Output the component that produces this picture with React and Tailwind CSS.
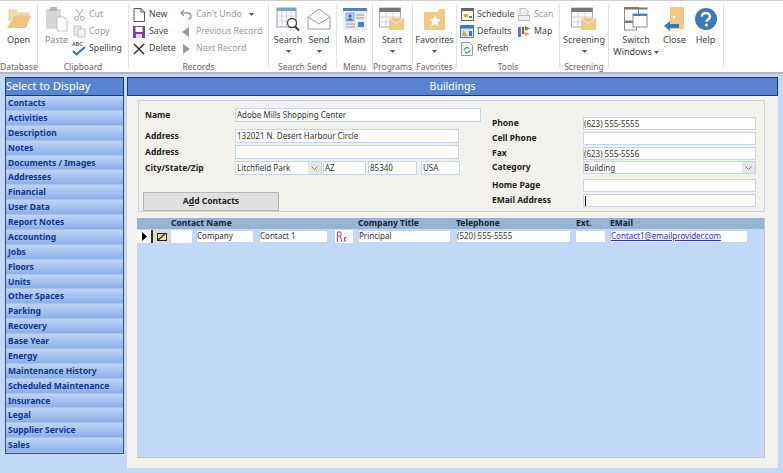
import React from 'react';

const Caret = () => (
  <svg width="5" height="3" viewBox="0 0 5 3" className="shrink-0"><path d="M0 0h5L2.500 3z" fill="#555" /></svg>
);

const IFolder = () => (
  <svg width="26" height="20" viewBox="0 0 26 20"><path d="M3 1h7l2 3h11v3H9L3 12z" fill="#f0dcb2" stroke="#d9bd86" strokeWidth="0.6" /><path d="M8 7h17l-5 12H1z" fill="#efc47d" /></svg>
);
const IPaste = () => (
  <svg width="24" height="26" viewBox="0 0 24 26"><rect x="1" y="3" width="15" height="20" rx="1" fill="#d6d6d6" /><rect x="5" y="1" width="7" height="4" fill="#b5b5b5" /><path d="M12 11h7l3 3v11H12z" fill="#fff" stroke="#c4c4c4" /></svg>
);
const IScissors = () => (
  <svg width="13" height="13" viewBox="0 0 13 13" fill="none" stroke="#aaa" strokeWidth="1"><path d="M3 1l5 8M10 1L5 9" /><circle cx="3.500" cy="10.500" r="2" /><circle cx="9.500" cy="10.500" r="2" /></svg>
);
const ICopy = () => (
  <svg width="13" height="13" viewBox="0 0 13 13" fill="#e8e8e8" stroke="#b5b5b5" strokeWidth="0.8"><rect x="1" y="1" width="7" height="9" /><rect x="5" y="4" width="7" height="8" fill="#f4f4f4" /></svg>
);
const ISpell = () => (
  <svg width="14" height="15" viewBox="0 0 14 15"><text x="0" y="5" fontSize="5" fontWeight="700" fill="#555" fontFamily="Liberation Sans">ABC</text><path d="M1 10l3.500 3.500L13 6" fill="none" stroke="#2f6fc0" strokeWidth="2" /></svg>
);
const INew = () => (
  <svg width="12" height="14" viewBox="0 0 12 14"><path d="M1 .5h7l3.500 3.500v9.500H1z" fill="#fff" stroke="#555" /><path d="M8 .5V4h3.500" fill="none" stroke="#555" /></svg>
);
const ISave = () => (
  <svg width="12" height="12" viewBox="0 0 12 12"><rect width="12" height="12" fill="#7a3fa8" /><rect x="2.500" y="1" width="7" height="5" fill="#fff" /><rect x="3" y="8" width="6" height="4" fill="#ddd" /></svg>
);
const IDelete = () => (
  <svg width="12" height="12" viewBox="0 0 12 12"><path d="M1 1l10 10M11 1L1 11" stroke="#333" strokeWidth="1.500" /></svg>
);
const IUndo = () => (
  <svg width="12" height="11" viewBox="0 0 12 11" fill="none" stroke="#999" strokeWidth="1.400"><path d="M4 1L1 4l3 3" /><path d="M1 4h6c3 0 4 2 4 3.500S10 10 8 10" /></svg>
);
const IPrev = () => (
  <svg width="8" height="10" viewBox="0 0 8 10"><path d="M7 0v10L0 5z" fill="#999" /></svg>
);
const INext = () => (
  <svg width="8" height="10" viewBox="0 0 8 10"><path d="M1 0v10l7-5z" fill="#999" /></svg>
);
const ISearch = () => (
  <svg width="25" height="26" viewBox="0 0 25 26"><rect x="1" y="2" width="19" height="19" fill="#fff" stroke="#999" /><rect x="1" y="2" width="19" height="3" fill="#7d9fd0" /><path d="M6 5v16M10.500 5v16M15 5v16M1 10h19M1 15h19" stroke="#b5c3d8" strokeWidth="0.7" /><circle cx="16" cy="17" r="4.500" fill="#fff" stroke="#444" strokeWidth="1.300" /><path d="M19 20.500l4 4" stroke="#333" strokeWidth="1.800" /></svg>
);
const ISend = () => (
  <svg width="24" height="22" viewBox="0 0 24 22" fill="#fff" stroke="#9a9a9a"><path d="M1 9L12 1l11 8v12H1z" /><path d="M1 9l11 7 11-7" /></svg>
);
const IMain = () => (
  <svg width="24" height="22" viewBox="0 0 24 22"><rect width="24" height="22" fill="#e9edf2" /><rect width="24" height="3" fill="#4f81bd" /><rect x="3" y="5" width="8" height="8" fill="#c7d6ea" stroke="#4f81bd" strokeWidth="0.6" /><circle cx="7" cy="8" r="1.800" fill="#3f6ea8" /><path d="M4 12.500c1-3 5-3 6 0z" fill="#3f6ea8" /><path d="M13 7h8M13 10h8M3 16h9M3 19h9" stroke="#999" strokeWidth="1.200" /><rect x="15" y="14" width="6" height="5" fill="#4f81bd" /></svg>
);
const IGridMail = () => (
  <svg width="26" height="24" viewBox="0 0 26 24"><rect x="0.500" y="1" width="21" height="19" fill="#fff" stroke="#aaa" /><rect x="0.500" y="1" width="21" height="4" fill="#777" /><path d="M7 5v15M14 5v15M1 10h20M1 15h20" stroke="#bbb" strokeWidth="0.7" /><rect x="10" y="11" width="15" height="12" fill="#efc985" /><path d="M10 11l7.500 6 7.500-6" fill="none" stroke="#fff" strokeWidth="0.800" /></svg>
);
const IFav = () => (
  <svg width="22" height="24" viewBox="0 0 22 24"><path d="M0 5h14l1-3h6v21H0z" fill="#efc985" /><path d="M11 8l1.800 4 4.200.4-3.200 2.800 1 4.200L11 17.200 7.200 19.400l1-4.200L5 12.400l4.200-.4z" fill="#fff" /></svg>
);
const ISchedule = () => (
  <svg width="13" height="13" viewBox="0 0 13 13"><rect x="0.500" y="0.500" width="12" height="12" fill="#fff" stroke="#666" /><rect x="0.500" y="0.500" width="12" height="2.500" fill="#666" /><rect x="3" y="6" width="4" height="3" fill="#e8a23c" /><rect x="8" y="8" width="3" height="2" fill="#4f81bd" /></svg>
);
const IDefaults = () => (
  <svg width="14" height="13" viewBox="0 0 14 13"><rect x="0.500" y="0.500" width="13" height="12" fill="#dbe6f3" stroke="#4f81bd" /><rect x="0.500" y="0.500" width="13" height="3" fill="#3a76b8" /><path d="M3 5l5 6H2z" fill="#e8a23c" /><rect x="9" y="6" width="3" height="5" fill="#3a76b8" /></svg>
);
const IRefresh = () => (
  <svg width="12" height="14" viewBox="0 0 12 14"><path d="M.5.5h8l3 3v10H.5z" fill="#f5f5f5" stroke="#999" /><path d="M3 8.500a3 3 0 015-2M9 8a3 3 0 01-5 2" fill="none" stroke="#3f9a52" strokeWidth="1.200" /></svg>
);
const IScan = () => (
  <svg width="12" height="13" viewBox="0 0 12 13" fill="#eee" stroke="#bbb"><path d="M2 .5h6l2 2v5H2z" /><rect x="0.500" y="7.500" width="11" height="5" /></svg>
);
const IMap = () => (
  <svg width="13" height="12" viewBox="0 0 13 12"><rect x="0" y="1" width="3" height="10" fill="#4f81bd" /><rect x="4" y="1" width="2" height="7" fill="#c0392b" /><path d="M7 0l5 2.500L7 5z" fill="#3f9a52" /><path d="M7 6l5 2-5 2z" fill="#e8a23c" /></svg>
);
const ISwitch = () => (
  <svg width="24" height="24" viewBox="0 0 24 24"><rect x="0.500" y="0.500" width="14" height="15" fill="#fff" stroke="#888" /><rect x="0.500" y="0.500" width="23" height="2" fill="#777" /><rect x="0.500" y="14" width="12" height="9" fill="#fff" stroke="#888" /><rect x="0.500" y="14" width="12" height="2" fill="#777" /><rect x="9" y="7" width="14" height="13" fill="#fff" stroke="#888" /><rect x="9" y="7" width="14" height="2" fill="#4f81bd" /></svg>
);
const IClose = () => (
  <svg width="22" height="24" viewBox="0 0 22 24"><rect x="6" y="0" width="14" height="22" fill="#efc985" /><circle cx="10" cy="10" r="1" fill="#fff" /><path d="M0 19l6-5v3h9v4H6v3z" fill="#3a76b8" /></svg>
);
const IHelp = () => (
  <svg width="22" height="22" viewBox="0 0 22 22"><circle cx="11" cy="11" r="11" fill="#3f78b8" /><path d="M7 8.500C7 6 9 5 11 5s4 1.200 4 3.500c0 3-3.600 2.800-3.600 5.500" fill="none" stroke="#fff" strokeWidth="2.400" /><circle cx="11.400" cy="17" r="1.500" fill="#fff" /></svg>
);

const Group = ({ label, w, children }) => (
  <div className={`${w} flex h-[64px] shrink-0 flex-col border-r border-[#e2e2e2]`}>
    <div className="flex flex-1">{children}</div>
    <div className="-mb-[5px] text-center text-[8.5px] leading-[12px] whitespace-nowrap text-[#666]">{label}</div>
  </div>
);

const Large = ({ w, label, icon, caret, dim, second }) => (
  <div className={`${w} flex flex-col items-center pt-[1px]`}>
    <div className="flex h-[28px] items-center justify-center">{icon}</div>
    <div className={`mt-[1px] text-[9px] leading-[12px] whitespace-nowrap ${dim ? 'text-[#888]' : 'text-[#444]'}`}>{label}</div>
    {second && <div className="flex items-center gap-[2px] text-[9px] leading-[12px] whitespace-nowrap text-[#444]">{second}{caret && <Caret />}</div>}
    {caret && !second && <div className="mt-[4px] leading-none"><Caret /></div>}
  </div>
);

const Small = ({ icon, label, dim, caret }) => (
  <div className={`flex h-[17px] items-center gap-[3px] text-[8.8px] whitespace-nowrap ${dim ? 'text-[#9a9a9a]' : 'text-[#444]'}`}>
    <span className="flex w-[14px] shrink-0 justify-center">{icon}</span>
    {label}
    {caret && <span className="ml-[4px]"><Caret /></span>}
  </div>
);

const Ribbon = () => (
  <div className="flex h-[74px] border-t border-b-2 border-t-[#d0d0d0] border-b-[#b4b4b4] bg-white pt-[3px] [font-family:'Noto_Sans',sans-serif]">
    <Group label="Database" w="w-[38px]"><Large w="w-[37px]" label="Open" icon={<IFolder />} /></Group>
    <Group label="Clipboard" w="w-[91px]">
      <div className="w-[33px]"><Large w="w-[37px]" label="Paste" dim icon={<IPaste />} /></div>
      <div className="ml-[1px] flex flex-col pt-[2px]">
        <Small dim icon={<IScissors />} label="Cut" />
        <Small dim icon={<ICopy />} label="Copy" />
        <Small icon={<ISpell />} label="Spelling" />
      </div>
    </Group>
    <Group label="Records" w="w-[140px]">
      <div className="flex w-[50px] flex-col pt-[2px] pl-[3px]">
        <Small icon={<INew />} label="New" />
        <Small icon={<ISave />} label="Save" />
        <Small icon={<IDelete />} label="Delete" />
      </div>
      <div className="flex flex-col pt-[2px]">
        <Small dim caret icon={<IUndo />} label="Can't Undo" />
        <Small dim icon={<IPrev />} label="Previous Record" />
        <Small dim icon={<INext />} label="Next Record" />
      </div>
    </Group>
    <Group label="Search Send" w="w-[68px]">
      <div className="flex pl-[2px]">
        <Large w="w-[34px]" label="Search" caret icon={<ISearch />} />
        <Large w="w-[28px]" label="Send" caret icon={<ISend />} />
      </div>
    </Group>
    <Group label="Menu" w="w-[36px]"><Large w="w-[36px]" label="Main" icon={<IMain />} /></Group>
    <Group label="Programs" w="w-[40px]"><Large w="w-[38px]" label="Start" caret icon={<IGridMail />} /></Group>
    <Group label="Favorites" w="w-[44px]"><Large w="w-[44px]" label="Favorites" caret icon={<IFav />} /></Group>
    <Group label="Tools" w="w-[103px]">
      <div className="flex w-[60px] flex-col pt-[2px] pl-[3px]">
        <Small icon={<ISchedule />} label="Schedule" />
        <Small icon={<IDefaults />} label="Defaults" />
        <Small icon={<IRefresh />} label="Refresh" />
      </div>
      <div className="flex flex-col pt-[2px]">
        <Small dim icon={<IScan />} label="Scan" />
        <Small icon={<IMap />} label="Map" />
      </div>
    </Group>
    <Group label="Screening" w="w-[49px]"><Large w="w-[49px]" label="Screening" caret icon={<IGridMail />} /></Group>
    <Group label="" w="w-[115px]">
      <div className="flex pl-[4px]">
        <Large w="w-[46px]" label="Switch" second="Windows" caret icon={<ISwitch />} />
        <Large w="w-[31px]" label="Close" icon={<IClose />} />
        <Large w="w-[31px]" label="Help" icon={<IHelp />} />
      </div>
    </Group>
  </div>
);

const navItems = ['Contacts','Activities','Description','Notes','Documents / Images','Addresses','Financial','User Data','Report Notes','Accounting','Jobs','Floors','Units','Other Spaces','Parking','Recovery','Base Year','Energy','Maintenance History','Scheduled Maintenance','Insurance','Legal','Supplier Service','Sales'];

const Sidebar = () => (
  <div className="flex w-[119px] shrink-0 flex-col">
    <div className="flex h-[19px] items-center border border-[#24365a] bg-[#5885d2] text-[11px] text-white [font-family:'Liberation_Sans',sans-serif]">Select to Display</div>
    <div className="flex h-[358px] flex-col border-x border-b border-[#3f5068]">
      {navItems.map((n) => (
        <div key={n} className="flex flex-1 items-center border-b border-[#a9c4ea] bg-gradient-to-b from-[#bcd5f6] to-[#8cb0e5] pt-[1px] pl-[2px] text-[8.5px] font-bold whitespace-nowrap text-[#0f3596] [font-family:'Liberation_Sans',sans-serif]">{n}</div>
      ))}
    </div>
  </div>
);

const Box = ({ w, children, h = 'h-[14px]', pl = 'pl-[1px]' }) => (
  <div className={`${w} ${h} ${pl} flex shrink-0 items-center border border-[#c3d5e8] bg-white text-[8px] whitespace-nowrap text-[#333] [font-family:'Liberation_Sans',sans-serif]`}>{children}</div>
);

const Label = ({ w, children }) => (
  <div className={`${w} shrink-0 pb-[2px] text-[8.5px] leading-[11px] font-bold whitespace-nowrap text-[#222] [font-family:'Liberation_Sans',sans-serif]`}>{children}</div>
);

const ComboBtn = () => (
  <div className="ml-auto flex h-full w-[13px] items-center justify-center bg-[#e6e6e6]">
    <svg width="7" height="4" viewBox="0 0 7 4" fill="none" stroke="#777"><path d="M.5.5l3 3 3-3" /></svg>
  </div>
);

const Form = () => {
  const rh = 'h-[13px]';
  return (
    <div className="mt-[4px] mr-[13px] ml-[11px] flex h-[112px] shrink-0 border border-[#c3d5e8] bg-[#f3f1ec]">
      <div className="w-[350px] shrink-0 pt-[7px] pl-[6px]">
        <div className="flex items-center"><Label w="w-[90px]">Name</Label><Box w="w-[246px]" pl="pl-[1px] pb-[1px]">Adobe Mills Shopping Center</Box></div>
        <div className="mt-[7px] flex items-center"><Label w="w-[90px]">Address</Label><Box w="w-[224px]">132021 N. Desert Harbour Circle</Box></div>
        <div className="mt-[2px] flex items-center"><Label w="w-[90px]">Address</Label><Box w="w-[224px]" /></div>
        <div className="mt-[2px] flex items-center">
          <Label w="w-[90px]">City/State/Zip</Label>
          <Box w="w-[87px]">Litchfield Park<ComboBtn /></Box>
          <div className="ml-[1px]"><Box w="w-[43px]">AZ</Box></div>
          <div className="ml-[2px]"><Box w="w-[49px]">85340</Box></div>
          <div className="ml-[4px]"><Box w="w-[39px]">USA</Box></div>
        </div>
        <button className="mt-[17px] -ml-[2px] flex h-[19px] w-[136px] items-center justify-center border border-[#b5b5b5] bg-[#e0e0e0] text-[8.5px] font-bold text-[#222] [font-family:'Liberation_Sans',sans-serif]">A<span className="underline">d</span>d Contacts</button>
      </div>
      <div className="flex-1 pt-[16px] pl-[3px]">
        <div className="flex items-center"><Label w="w-[91px]">Phone</Label><Box w="w-[173px]" h={rh} pl="pl-0">(623) 555-5555</Box></div>
        <div className="mt-[2px] flex items-center"><Label w="w-[91px]">Cell Phone</Label><Box w="w-[173px]" h={rh} /></div>
        <div className="mt-[2px] flex items-center"><Label w="w-[91px]">Fax</Label><Box w="w-[173px]" h={rh} pl="pl-0">(623) 555-5556</Box></div>
        <div className="mt-[1px] flex items-center"><Label w="w-[91px]">Category</Label><Box w="w-[173px]" h={rh} pl="pl-0">Building<ComboBtn /></Box></div>
        <div className="mt-[5px] flex items-center"><Label w="w-[91px]">Home Page</Label><Box w="w-[173px]" h={rh} /></div>
        <div className="mt-[2px] flex items-center"><Label w="w-[91px]">EMail Address</Label><Box w="w-[173px]" h={rh}><span className="h-[10px] w-px bg-black" /></Box></div>
      </div>
    </div>
  );
};

const Grid = () => {
  const rh = 'h-[13px]';
  const cp = 'pl-0 pb-[1px]';
  return (
    <div className="mt-[6px] mr-[13px] ml-[10px] flex h-[240px] shrink-0 flex-col border-r border-b border-[#c4c4c4] bg-[#c2d8f8]">
      <div className="flex h-[11px] shrink-0 items-center bg-[#95b3d3] text-[8.5px] font-bold text-[#1a2333] [font-family:'Liberation_Sans',sans-serif]">
        <span className="ml-[34px] w-[187px]">Contact Name</span>
        <span className="w-[98px]">Company Title</span>
        <span className="w-[120px]">Telephone</span>
        <span className="w-[34px]">Ext.</span>
        <span>EMail</span>
      </div>
      <div className="mt-[1px] flex h-[13px] items-stretch">
        <div className="flex w-[16px] items-center justify-center border-r-2 border-[#333] bg-white">
          <svg width="5" height="9" viewBox="0 0 5 9"><path d="M0 0v9l5-4.500z" fill="#000" /></svg>
        </div>
        <div className="flex w-[17px] items-center justify-center bg-[#dcdcdc]">
          <svg width="10" height="8" viewBox="0 0 10 8"><rect x="0.500" y="0.500" width="9" height="7" fill="#f3e48a" stroke="#222" /><path d="M1 7l7-6" stroke="#224" strokeWidth="1.200" /></svg>
        </div>
        <div className="ml-[1px] w-[21px] bg-white" />
        <div className="ml-[4px]"><Box w="w-[58px]" h={rh} pl={cp}>Company</Box></div>
        <div className="ml-[5px]"><Box w="w-[69px]" h={rh} pl={cp}>Contact 1</Box></div>
        <div className="ml-[7px] flex w-[18px] items-center bg-white pl-[1px]">
          <svg width="11" height="11" viewBox="0 0 11 11" fill="none" stroke="#f03040"><path d="M1.500 11V1H5v4H1.500M4 5l2 6M10.500 6.500H8.500V10h2" /></svg>
        </div>
        <div className="ml-[5px]"><Box w="w-[93px]" h={rh} pl={cp}>Principal</Box></div>
        <div className="ml-[5px]"><Box w="w-[115px]" h={rh} pl={cp}>(520) 555-5555</Box></div>
        <div className="ml-[4px]"><Box w="w-[31px]" h={rh} /></div>
        <div className="ml-[4px]"><Box w="w-[138px]" h={rh} pl={cp}><span className="text-[#2a2ae0] underline">Contact1@emailprovider.com</span></Box></div>
      </div>
    </div>
  );
};

export default function App() {
  return (
    <div className="h-[473px] w-[783px] overflow-hidden bg-[#c2d8f8]">
      <Ribbon />
      <div className="flex pt-[3px] pl-[5px]">
        <Sidebar />
        <div className="ml-[3px] flex w-[651px] shrink-0 flex-col">
          <div className="flex h-[19px] items-center justify-center border border-[#24365a] bg-[#5885d2] text-[10.500px] text-white [font-family:'Noto_Sans',sans-serif]">Buildings</div>
          <div className="flex h-[372px] flex-col bg-[#f3f1ec]">
            <Form />
            <Grid />
          </div>
        </div>
      </div>
    </div>
  );
}
